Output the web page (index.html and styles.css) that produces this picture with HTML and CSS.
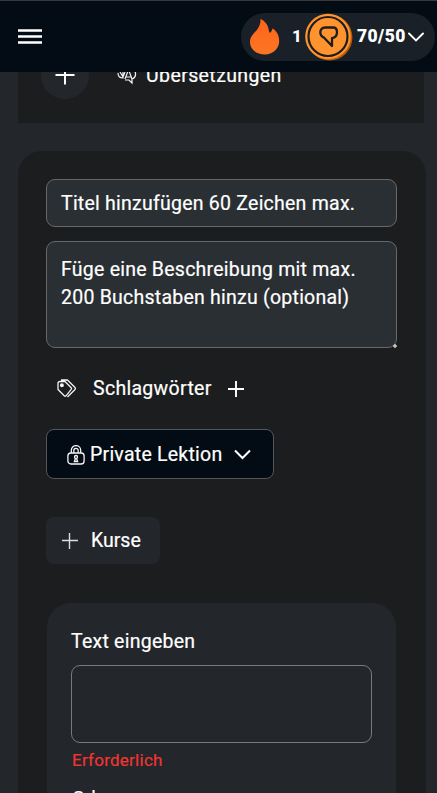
FILE: index.html
```html
<!DOCTYPE html>
<html lang="de">
<head>
<meta charset="utf-8">
<title>Lektion</title>
<link rel="stylesheet" href="styles.css">
</head>
<body>
<div class="app">
  <header class="topbar">
    <svg class="menu" width="24" height="15" viewBox="0 0 24 15"><path d="M0 1.500h24M0 7.500h24M0 13.500h24" stroke="#fff" stroke-width="2.700"/></svg>
    <div class="stats">
      <svg class="flame" width="30" height="36" viewBox="0 0 30 36"><defs><linearGradient id="fire" x2="0" y2="1"><stop stop-color="#ff641a"/><stop offset="1" stop-color="#fb7625"/></linearGradient></defs><path fill="url(#fire)" d="M10.500 0C15 2 18 6 18.500 10Q19 13 20 14Q22 12 22.500 9.500C27 12 29.200 17 29.200 22C29.200 30 22.500 35.500 15 35.500C7 35.500 0 30.500 0 23C0 18 3 15 6.500 11.500C9.500 8 10.800 4 10.500 0Z"/></svg>
      <span class="streak">1</span>
      <svg class="coin" width="48" height="48" viewBox="0 0 48 48"><circle cx="24.500" cy="24.500" r="22.900" fill="#b95b08"/><circle cx="23" cy="23.500" r="22.800" fill="#ff942f"/><circle cx="23" cy="23.500" r="19.500" fill="none" stroke="#1c1d1f" stroke-width="2.200"/><path d="M20 14.500h8c2.700 0 4 2 4 4.500 0 3.700-1.500 5.800-5 6.200V33L18.600 24.300c-2.200-.8-3.300-2.800-3.300-5A4.700 4.700 0 0 1 20 14.500Z" fill="none" stroke="#1c1d1f" stroke-width="2.300" stroke-linejoin="round"/></svg>
      <span class="points">70/50</span>
      <svg class="chev" width="16" height="10" viewBox="0 0 16 10"><path d="M1 1.500l7 7 7-7" fill="none" stroke="#fff" stroke-width="1.900" stroke-linecap="round"/></svg>
    </div>
  </header>
  <main>
    <section class="strip">
      <span class="round"><svg width="20" height="20" viewBox="0 0 20 20"><path d="M.5 10h19M10 .5v19" stroke="#fff" stroke-width="2"/></svg></span>
      <svg class="translate" width="20" height="20" viewBox="0 0 20 20" fill="none" stroke="#f4f4f4" stroke-width="1.200"><path d="M1 5V2h10v4M1 8q0 5 5 5V5M3 7l3 5 2-5M8 14l3-8h1l3 8M9 12h5M16 5c4 2 3 8-1 9v4l-3-3H8"/></svg>
      <span class="t t-translate">Übersetzungen</span>
    </section>
    <section class="panel">
      <div class="field title"><span class="t t-title">Titel hinzufügen 60 Zeichen max.</span></div>
      <div class="field desc"><span class="t t-desc1">Füge eine Beschreibung mit max.</span><span class="t t-desc2">200 Buchstaben hinzu (optional)</span>
        <svg class="grip" width="4" height="4" viewBox="0 0 4 4"><path d="M2 0v4M0 2h4" stroke="#c8cacb" stroke-width="1.500"/></svg>
      </div>
      <div class="tags">
        <svg width="20" height="20" viewBox="0 0 20 20" fill="none" stroke="#f2f2f2" stroke-width="1.300" stroke-linejoin="round"><path d="M1 4.500q0-2 2-2h5l6.200 6.200q.8.900 0 1.700L9 16.800q-.9.900-1.800 0L1 10.500ZM4 1h6.500l7.500 7.500q.9 1 0 2L10.500 18"/><circle cx="4.900" cy="6.300" r="1.300" fill="#fff"/></svg>
        <span class="t t-tags">Schlagwörter</span>
        <svg class="plus" width="16" height="16" viewBox="0 0 16 16"><path d="M0 8h16M8 0v16" stroke="#fff" stroke-width="1.900"/></svg>
      </div>
      <div class="select">
        <svg width="18" height="20" viewBox="0 0 18 20" fill="none" stroke="#f5f5f5" stroke-width="1.300"><rect x=".9" y="8" width="16.200" height="11" rx="3"/><path d="M4.300 8V5.300a4.700 4.700 0 0 1 9.400 0V8M6.800 8V5.500a2.200 2.200 0 0 1 4.400 0V8"/><circle cx="9" cy="12" r="1.500"/><path d="M8.400 13.500l-1 3h3.200l-1-3"/></svg>
        <span class="t t-private">Private Lektion</span>
        <svg class="down" width="17" height="11" viewBox="0 0 17 11"><path d="M1 1.500l7.500 7.500L16 1.500" fill="none" stroke="#fff" stroke-width="2"/></svg>
      </div>
      <div class="course">
        <svg width="16" height="16" viewBox="0 0 16 16"><path d="M0 7.500h16M7.500 0v16" stroke="#ddd" stroke-width="1.400"/></svg>
        <span class="t t-course">Kurse</span>
      </div>
      <div class="card">
        <span class="t t-label">Text eingeben</span>
        <div class="box"></div>
        <span class="t t-error">Erforderlich</span>
        <span class="t t-or">Oder</span>
      </div>
    </section>
  </main>
</div>
</body>
</html>
```
FILE: styles.css
```css
* { box-sizing: border-box; }
body { margin: 0; background: #23262b; color: #fff; font-family: Roboto, "Liberation Sans", sans-serif; font-size: 19.5px; line-height: 28px; }
svg { display: block; flex: none; }
.app { width: 437px; height: 793px; overflow: hidden; display: flex; flex-direction: column; }
.topbar { height: 72px; flex: none; background: #030b14; border-top: 1px solid #393a3b; display: flex; align-items: center; padding: 0 2px 0 18px; }
.stats { width: 194px; height: 48px; margin-left: auto; border-radius: 24px; background: #1a2027; display: flex; align-items: center; padding-left: 9px; }
.streak { font-size: 17px; font-weight: 800; width: 12px; margin: -2px 0 0 11px; text-align: center; }
.coin { margin-left: 2px; }
.points { width: 50px; margin: -2px 0 0 4px; font-size: 17.5px; font-weight: 900; letter-spacing: .4px; white-space: nowrap; }
.chev { margin-left: 1px; }
main { height: 721px; overflow: hidden; flex: none; }
.strip { width: 406px; height: 51px; margin-left: 18px; background: #1c1d1e; display: flex; align-items: flex-start; }
.round { width: 48px; height: 48px; margin: -21px 0 0 23px; border-radius: 50%; background: #23262b; display: flex; align-items: center; justify-content: center; }
.translate { margin: -7px 0 0 28px; }
.t { display: block; white-space: nowrap; letter-spacing: .24px; -webkit-text-stroke: .2px currentColor; }
.t-translate { margin: -10px 0 0 9px; letter-spacing: .4px; }
.panel { width: 408px; height: 680px; margin: 28px 0 0 18px; padding: 28px; border-radius: 24px 24px 0 0; background: #1c1d1e; }
.field { width: 351px; border: 1px solid #65696c; border-radius: 9px; background: #2a2f33; padding: 0 13px 0 14px; }
.title { height: 48px; padding-top: 10px; }
.desc { position: relative; height: 107px; margin-top: 14px; padding-top: 14px; }
.grip { position: absolute; right: -1px; bottom: -1px; }
.tags { display: flex; align-items: center; height: 28px; margin: 27px 0 0 11px; }
.t-tags { margin-left: 16px; letter-spacing: .3px; }
.plus { margin-left: 16px; }
.select { width: 228px; height: 50px; margin-top: 26px; border: 1px solid #55585b; border-radius: 8px; background: #030b14; display: flex; align-items: center; padding: 1px 0 0 20px; }
.t-private { margin-left: 5px; }
.down { margin-left: 12px; }
.course { width: 114px; height: 47px; margin-top: 38px; border-radius: 8px; background: #23262b; display: flex; align-items: center; padding-left: 16px; }
.t-course { margin-left: 13px; letter-spacing: 0; }
.card { width: 349px; height: 220px; margin: 39px 0 0 1px; padding: 25px 24px 0; border-radius: 24px; background: #23262b; }
.box { width: 301px; height: 78px; margin-top: 9px; border: 1px solid #777a7d; border-radius: 9px; }
.t-error { margin: 3px 0 0 1px; color: #f13531; font-size: 17px; letter-spacing: .25px; }
.t-or { margin: 10px 0 0 1px; font-size: 19px; letter-spacing: 0; }
```
